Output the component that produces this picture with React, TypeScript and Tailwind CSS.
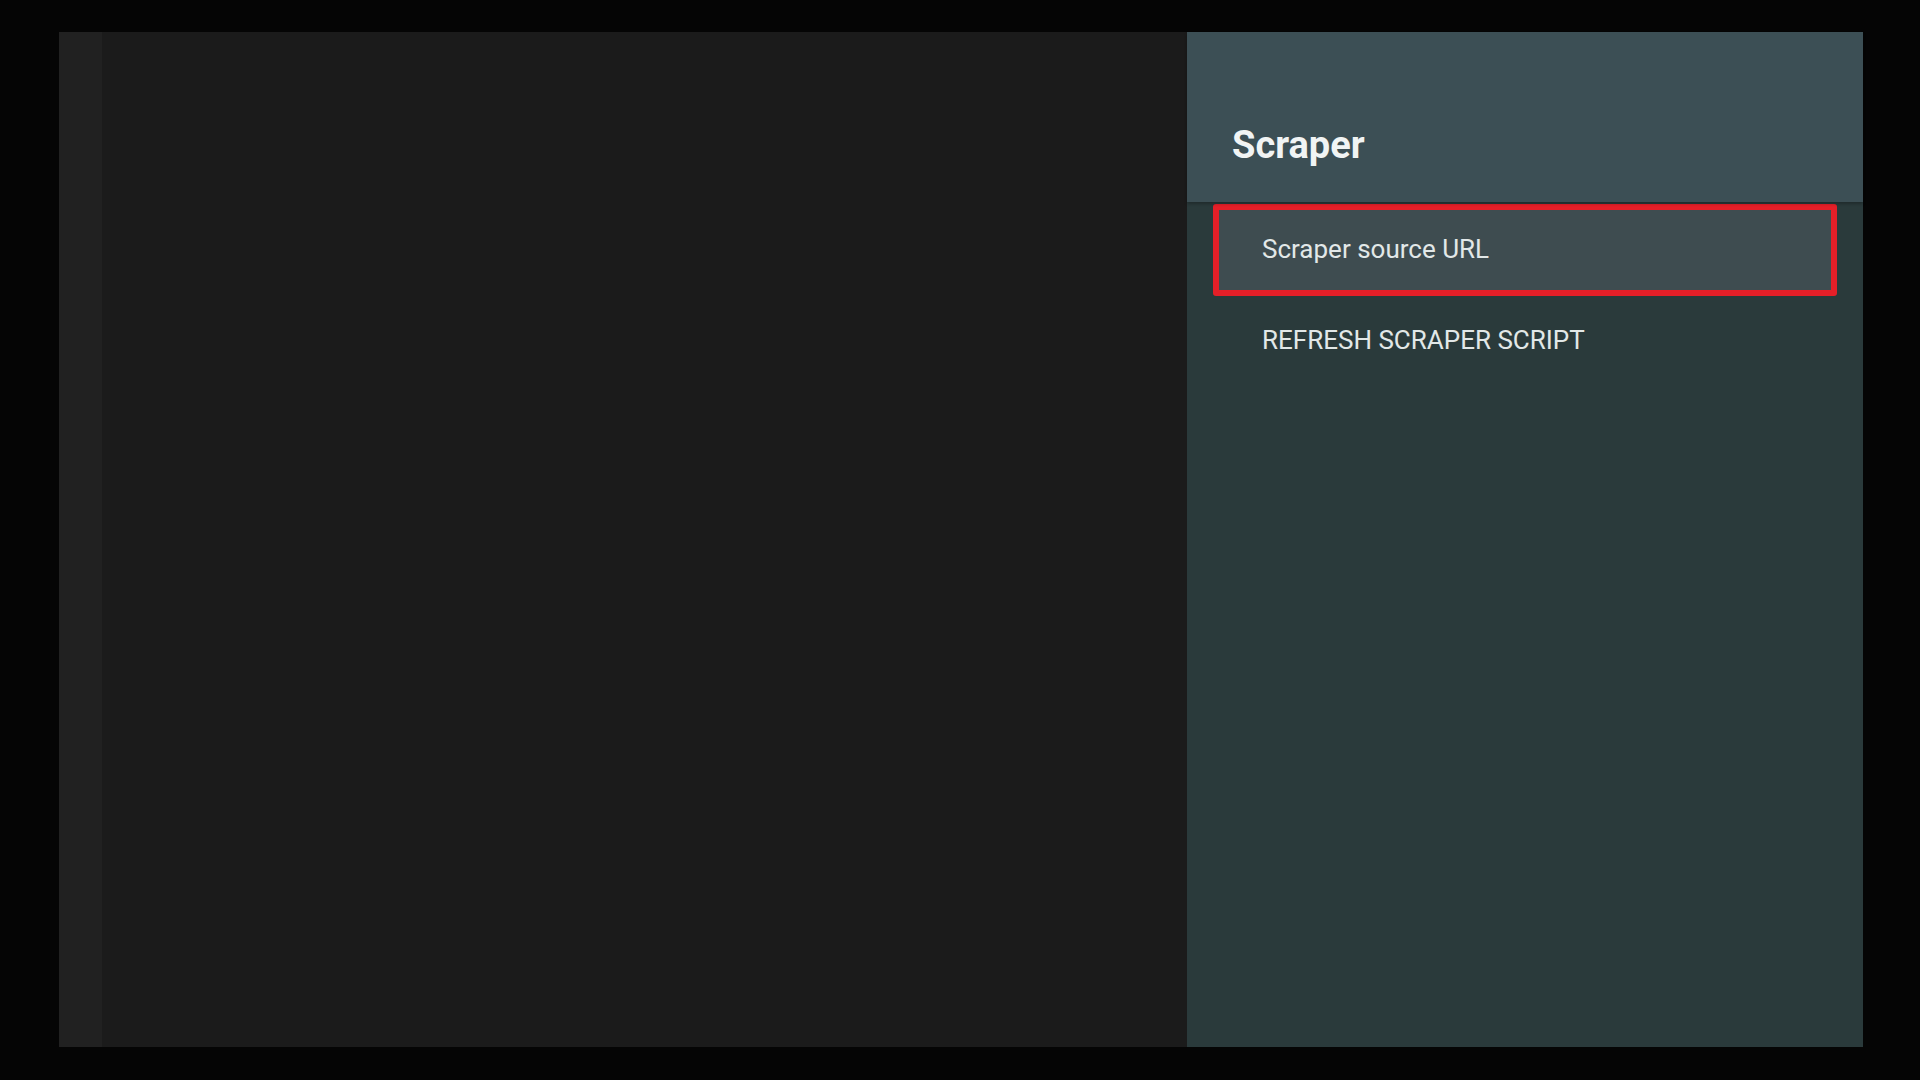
import React from 'react';

type Item = { label: string; focused?: boolean };

const items: Item[] = [
  { label: 'Scraper source URL', focused: true },
  { label: 'REFRESH SCRAPER SCRIPT' },
];

function SettingsPanel() {
  return (
    <div className="w-[676px] flex flex-col bg-[#2a3a3b]">
      <div className="h-[170px] bg-[#3c4f55] pl-[45px] pt-[94px] shadow-[0_2px_3px_rgba(0,0,0,0.25)] relative z-10">
        <h1 className="text-[38px] leading-none font-bold text-[#f1f4f4]">Scraper</h1>
      </div>
      <div className="flex flex-col mt-[2px] mx-[26px]">
        {items.map(item => (
          <div
            key={item.label}
            className={
              item.focused
                ? 'h-[92px] flex items-center pl-[43px] pb-[2px] border-[6px] border-[#e51f28] rounded-[3px] bg-[#3e4c50]'
                : 'h-[88px] flex items-center pl-[49px]'
            }
          >
            <span className="text-[26px] leading-none text-[#e2e8e8]">{item.label}</span>
          </div>
        ))}
      </div>
    </div>
  );
}

export default function App() {
  return (
    <div
      className="w-screen h-screen bg-[#050505] pt-[32px] pb-[33px] pl-[59px] pr-[57px]"
      style={{ fontFamily: 'Roboto, "Liberation Sans", sans-serif' }}
    >
      <div className="h-full flex">
        <div className="flex-1 flex bg-[#1b1b1b]">
          <div className="w-[43px] bg-[#212121]" />
        </div>
        <SettingsPanel />
      </div>
    </div>
  );
}
